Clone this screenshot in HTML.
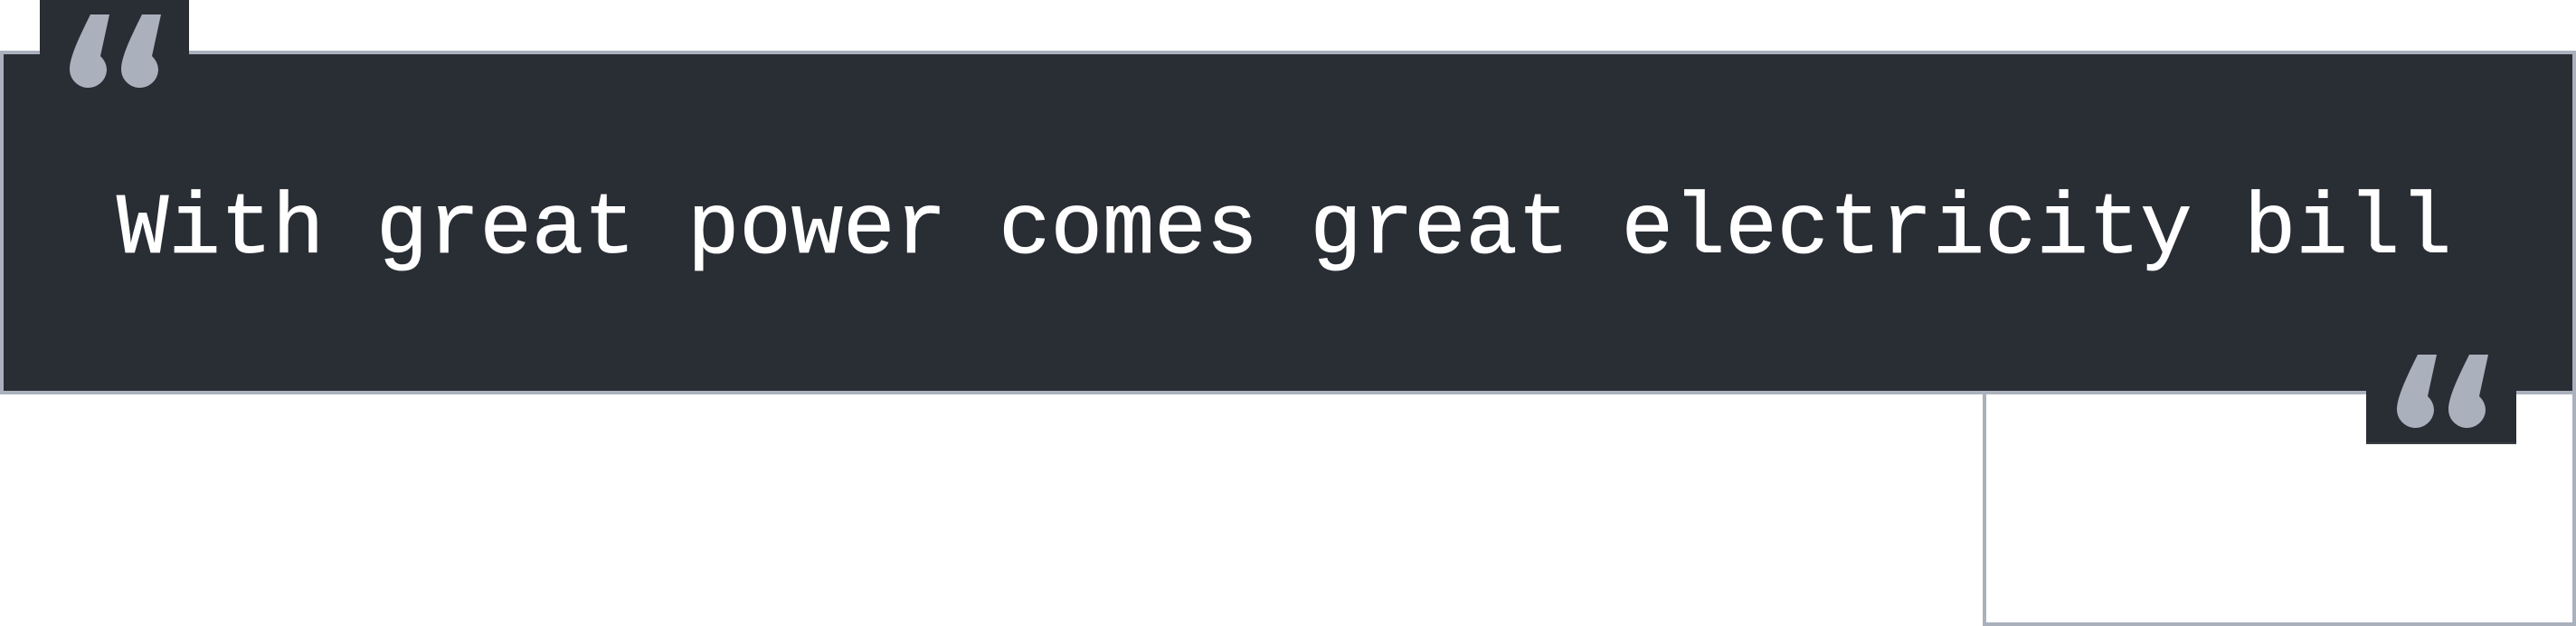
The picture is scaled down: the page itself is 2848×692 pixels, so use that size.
<!DOCTYPE html>
<html><head><style>
html,body{margin:0;padding:0;background:#fff;width:2848px;height:692px;overflow:hidden;position:relative}
div{position:absolute;box-sizing:border-box}
.dark{left:0;top:56px;width:2848px;height:380px;background:#292d34;border:4px solid #aab1bd}
.wbox{left:2192px;top:432px;width:656px;height:260px;border:4px solid #aab1bd;border-top:none}
.tab1{left:44px;top:0;width:165px;height:60px;background:#292d34}
.tab2{left:2616px;top:432px;width:166px;height:59px;background:#292d34;border-bottom:2px solid #3a3e45}
.txt{left:129px;top:206px;font:95.6px/96px "Liberation Mono",monospace;color:#fff;white-space:pre;-webkit-text-stroke:0.8px #fff}
svg{position:absolute;left:0;top:0}
</style></head><body>
<div class="dark"></div>
<div class="wbox"></div>
<div class="tab1"></div>
<div class="tab2"></div>
<div class="txt">With great power comes great electricity bill</div>
<svg width="2848" height="692">
<defs><path id="m" d="M100,16 L121,16 L111,62 C116,67 118,72 118,78 A20.5,20.5 0 1 1 77,75 C78,62 86,44 100,16 Z" fill="#aab1bd"/></defs>
<use href="#m"/><use href="#m" x="57"/>
<use href="#m" x="2573" y="376"/><use href="#m" x="2630" y="376"/>
</svg>
</body></html>
